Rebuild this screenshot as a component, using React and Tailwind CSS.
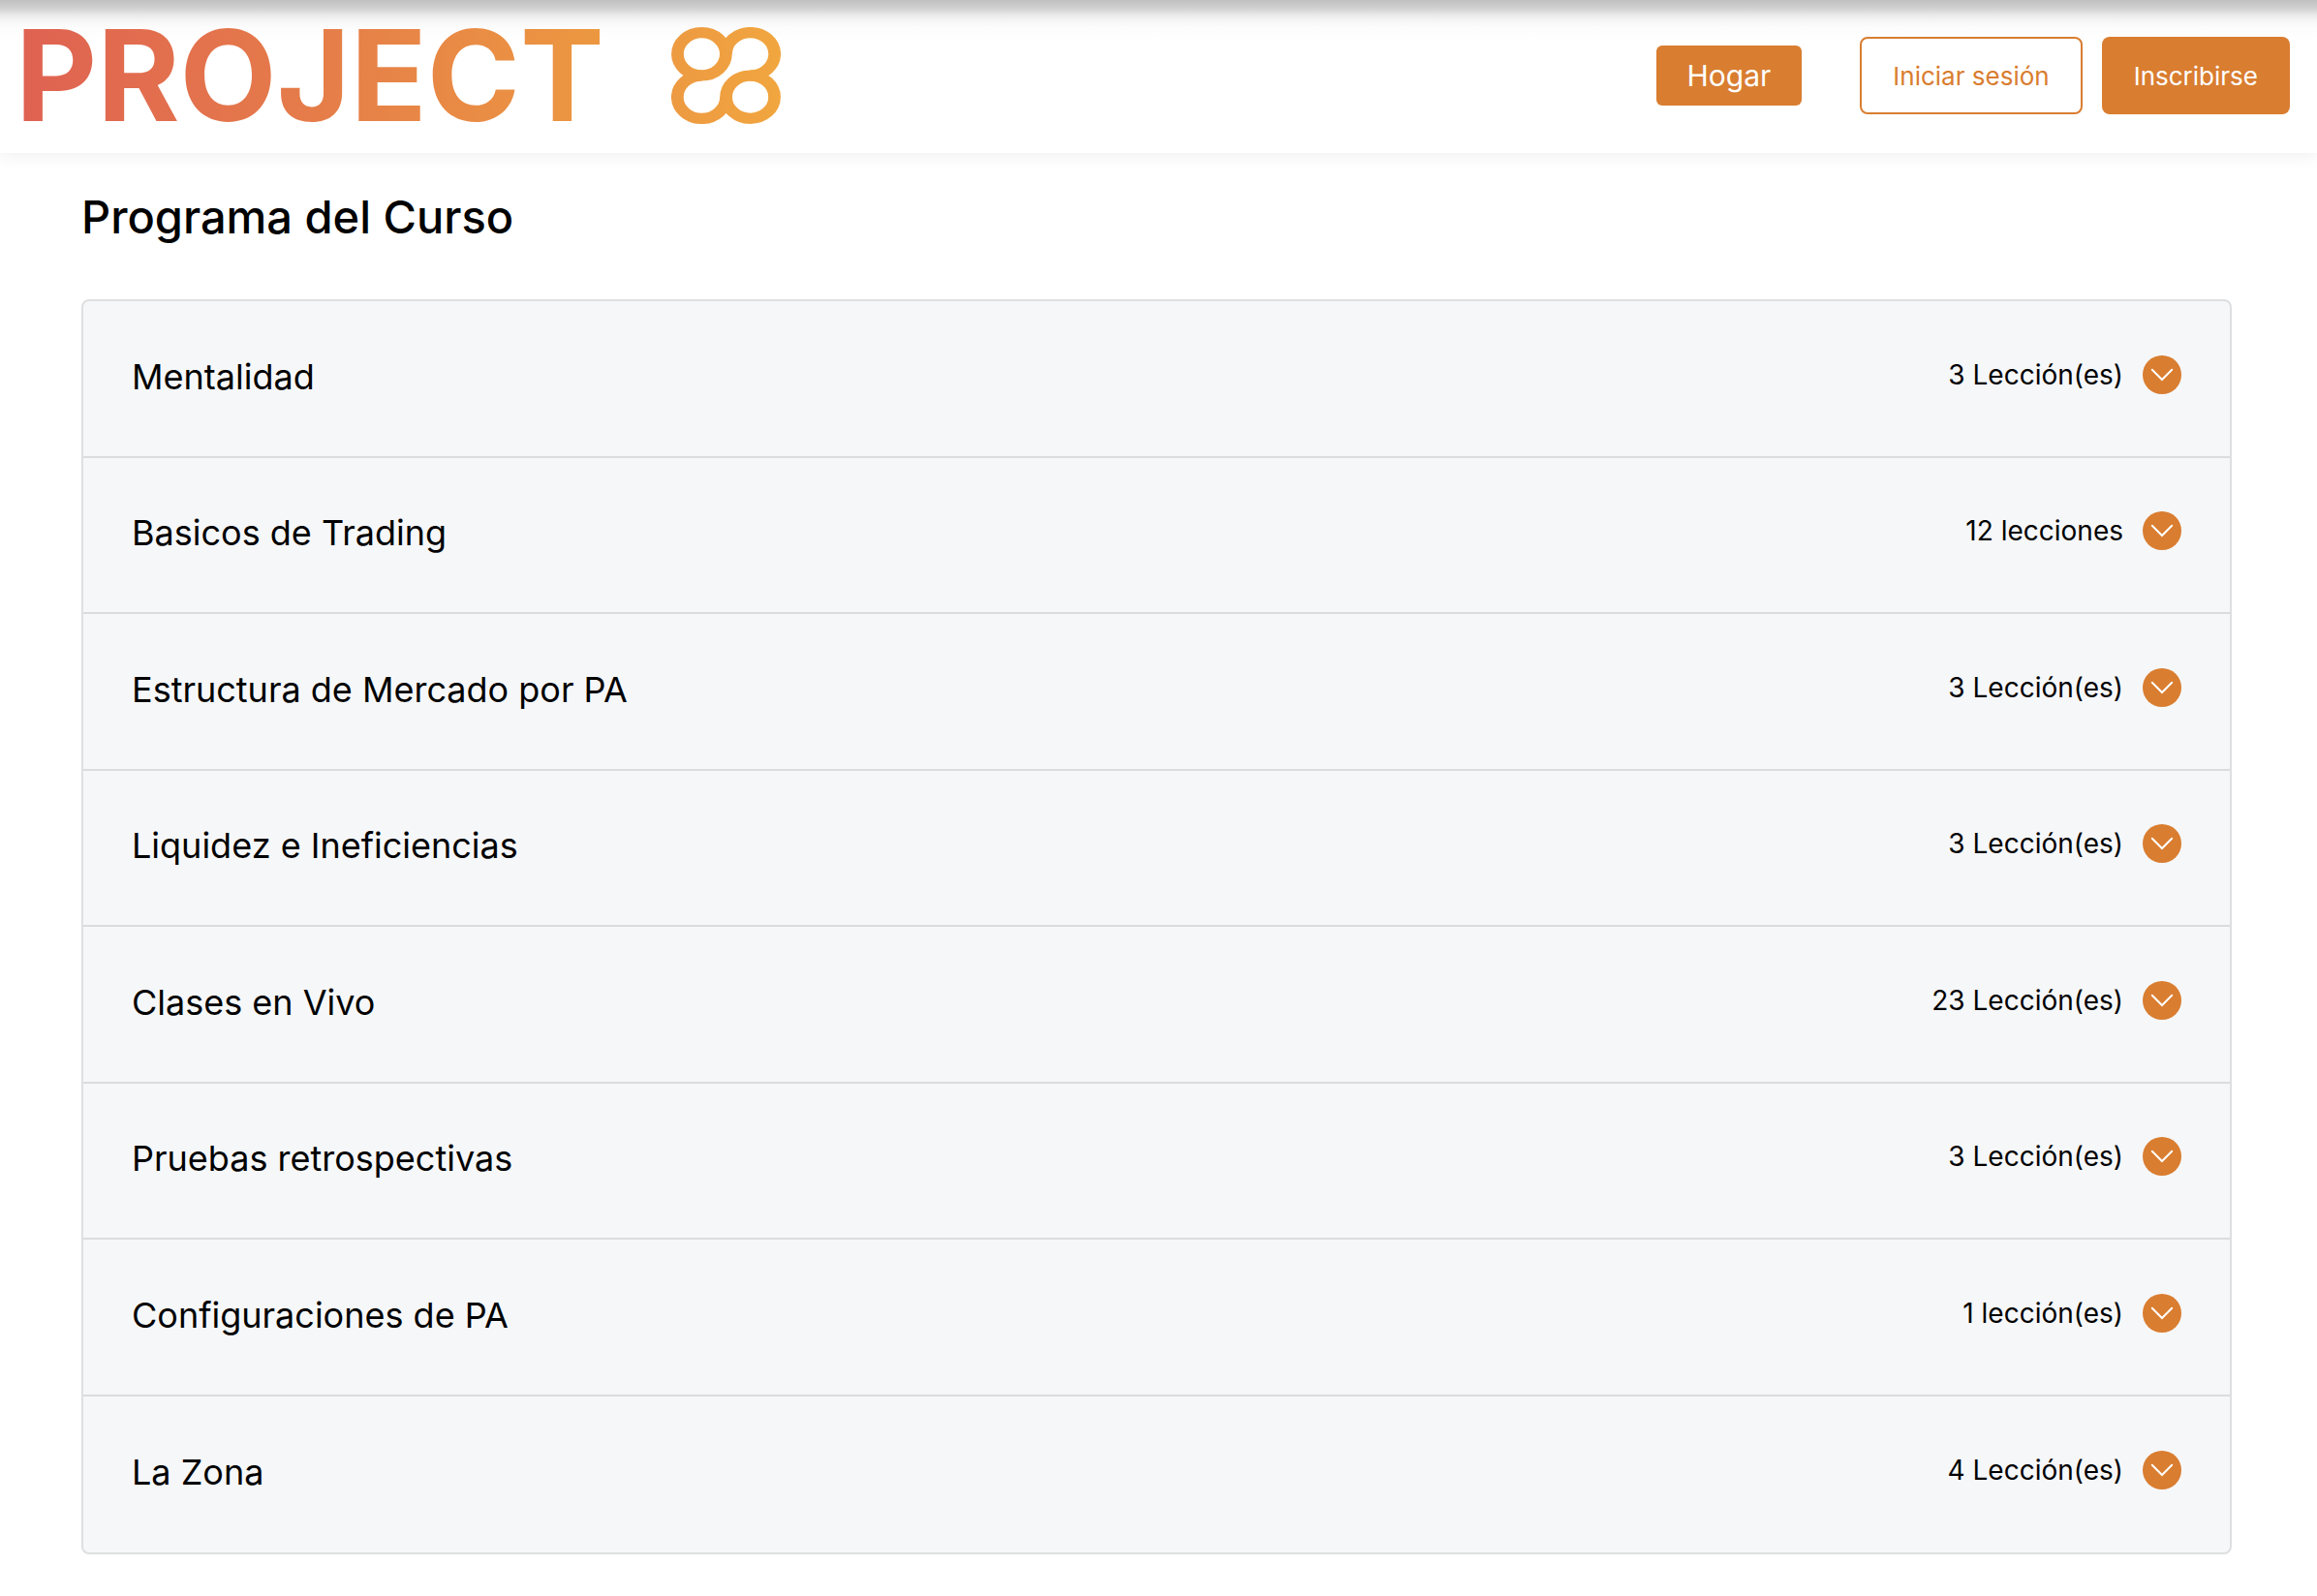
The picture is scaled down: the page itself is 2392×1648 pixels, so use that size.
import { useState } from 'react';

const SECTIONS = [
  { title: 'Mentalidad', lessons: '3 Lección(es)' },
  { title: 'Basicos de Trading', lessons: '12 lecciones' },
  { title: 'Estructura de Mercado por PA', lessons: '3 Lección(es)' },
  { title: 'Liquidez e Ineficiencias', lessons: '3 Lección(es)' },
  { title: 'Clases en Vivo', lessons: '23 Lección(es)' },
  { title: 'Pruebas retrospectivas', lessons: '3 Lección(es)' },
  { title: 'Configuraciones de PA', lessons: '1 lección(es)' },
  { title: 'La Zona', lessons: '4 Lección(es)' },
];

function Logo() {
  return (
    <a href="#inicio" aria-label="Project 88" className="flex w-[790px] items-center justify-between">
      <span className="bg-gradient-to-r from-[#df6152] via-[#e57c49] to-[#ec9840] bg-clip-text text-[130px] leading-[100px] font-bold text-transparent">
        PROJECT
      </span>
      <svg className="h-[100px] w-[113px]" viewBox="0 0 100 100" preserveAspectRatio="none" fill="none">
        <defs>
          <linearGradient id="mark" x1="0" y1="0" x2="100" y2="0" gradientUnits="userSpaceOnUse">
            <stop offset="0" stopColor="#ed9a42" />
            <stop offset="1" stopColor="#f1a63f" />
          </linearGradient>
        </defs>
        <g stroke="url(#mark)" strokeWidth="11.3">
          <circle cx="27.8" cy="27.8" r="22.1" />
          <circle cx="72.2" cy="72.2" r="22.1" />
          <path d="M50 27.8A22.2 22.2 0 1 1 72.2 50" />
          <path d="M27.8 50A22.2 22.2 0 1 0 50 72.2" />
        </g>
      </svg>
    </a>
  );
}

function Header() {
  return (
    <header className="flex items-center justify-between bg-[linear-gradient(to_bottom,#c0c0c0_0px,#d2d2d2_9px,#e8e8e8_15px,#f5f5f5_21px,#fcfcfc_28px,#ffffff_42px)] pt-7 pr-7 pb-[30px] pl-4 shadow-[0_4px_16px_rgba(0,0,0,0.06)]">
      <Logo />
      <nav className="flex items-center">
        <a href="#hogar" className="mr-[60px] rounded-md bg-[#d97d30] px-8 py-[11px] text-[30px] leading-10 text-white">
          Hogar
        </a>
        <button type="button" className="mr-5 h-20 rounded-lg border-2 border-[#d97d30] bg-white px-8 text-[26px] text-[#d97d30]">
          Iniciar sesión
        </button>
        <button type="button" className="h-20 rounded-lg bg-[#d97d30] px-[33px] text-[26px] text-white">
          Inscribirse
        </button>
      </nav>
    </header>
  );
}

function SectionRow({ title, lessons }) {
  const [open, setOpen] = useState(false);

  return (
    <li className="border-b-2 border-[#dbdcde] last:border-b-0">
      <button
        type="button"
        aria-expanded={open}
        onClick={() => setOpen(!open)}
        className="flex h-full w-full items-center justify-between px-[50px] pb-2 text-left"
      >
        <span className="pt-1 text-[36px] leading-[44px]">{title}</span>
        <span className="flex items-center gap-5 text-[28px] leading-10">
          {lessons}
          <svg className={`h-10 w-10 ${open ? 'rotate-180' : ''}`} viewBox="0 0 40 40" fill="none">
            <circle cx="20" cy="20" r="20" fill="#d97d30" />
            <path d="M9.8 14.8 20 25l10.2-10.2" stroke="#fff" strokeWidth="2" strokeLinecap="round" />
          </svg>
        </span>
      </button>
    </li>
  );
}

export default function App() {
  return (
    <div className="min-h-screen bg-white font-['Inter',sans-serif] text-black">
      <Header />
      <main className="pt-9 pr-[88px] pb-10 pl-[84px]">
        <h1 className="mb-[55px] text-[47px] leading-[60px] font-medium">Programa del Curso</h1>
        <ul className="grid min-h-[1296px] auto-rows-fr rounded-lg border-2 border-[#dedfe0] bg-[#f6f7f9]">
          {SECTIONS.map((section) => (
            <SectionRow key={section.title} {...section} />
          ))}
        </ul>
      </main>
    </div>
  );
}
